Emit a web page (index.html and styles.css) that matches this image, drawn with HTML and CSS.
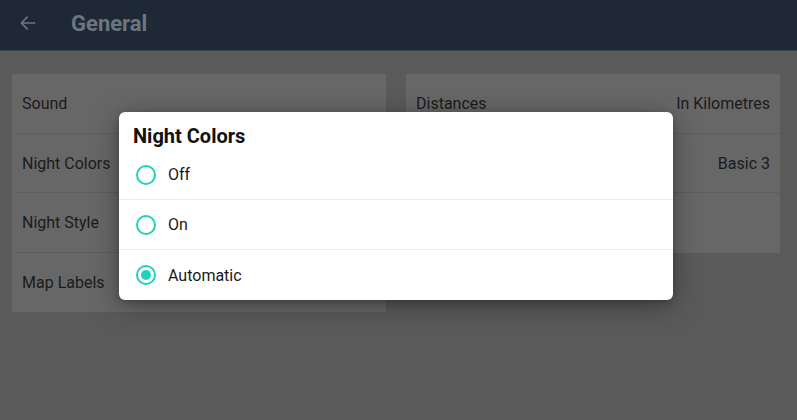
FILE: index.html
```html
<!DOCTYPE html>
<html lang="en">
<head>
<meta charset="utf-8">
<title>General</title>
<link rel="stylesheet" href="styles.css">
</head>
<body>
<header class="topbar">
  <svg class="back" width="20" height="20" viewBox="0 0 24 24"><path d="M20 12H5M11 5l-7 7 7 7" fill="none" stroke="currentColor" stroke-width="2" stroke-linecap="round" stroke-linejoin="round"/></svg>
  <h1 class="title">General</h1>
</header>
<main class="content">
  <section class="card">
    <div class="row"><span>Sound</span></div>
    <div class="row"><span>Night Colors</span></div>
    <div class="row"><span>Night Style</span></div>
    <div class="row last"><span>Map Labels</span></div>
  </section>
  <section class="card">
    <div class="row"><span>Distances</span><span>In Kilometres</span></div>
    <div class="row"><span></span><span>Basic 3</span></div>
    <div class="row last"><span></span></div>
  </section>
</main>
<div class="dialog">
  <h2 class="dialog-title">Night Colors</h2>
  <div class="option"><span class="radio"></span><span>Off</span></div>
  <div class="option"><span class="radio"></span><span>On</span></div>
  <div class="option last"><span class="radio checked"></span><span>Automatic</span></div>
</div>
</body>
</html>
```
FILE: styles.css
```css
html, body {
  margin: 0;
  padding: 0;
  background: #5a5a5a;
  font-family: Roboto, "Liberation Sans", sans-serif;
  width: 797px;
  height: 420px;
  overflow: hidden;
}
.topbar {
  background: #1f2936;
  border-bottom: 1px solid #3e444c;
  display: flex;
  align-items: center;
  box-sizing: border-box;
  height: 51px;
  padding-left: 18px;
  color: #6c7580;
}
.back {
  margin-top: -4px;
}
.title {
  margin: -3px 0 0 33px;
  font-size: 22px;
  font-weight: 700;
  color: #6c7580;
}
.content {
  display: grid;
  grid-template-columns: 374px 374px;
  column-gap: 20px;
  align-items: start;
  padding: 23px 17px 0 12px;
}
.card {
  background: #676767;
}
.row {
  height: 59.5px;
  box-sizing: border-box;
  display: flex;
  align-items: center;
  justify-content: space-between;
  padding: 0 10px;
  font-size: 16px;
  color: #1b1b1b;
  position: relative;
}
.row::after {
  content: "";
  position: absolute;
  left: 4px;
  right: 0;
  bottom: 0;
  height: 1px;
  background: #5e5e5e;
}
.row.last::after { display: none; }
.dialog {
  position: absolute;
  left: 119px;
  top: 112px;
  width: 554px;
  height: 188px;
  background: #fff;
  border-radius: 6px;
  box-shadow: 0 6px 28px rgba(0,0,0,0.35), 0 2px 6px rgba(0,0,0,0.2);
  overflow: hidden;
}
.dialog-title {
  margin: 0;
  padding: 12px 0 0 14px;
  height: 38px;
  box-sizing: border-box;
  font-size: 20px;
  line-height: 24px;
  font-weight: 700;
  color: #111;
}
.option {
  height: 50px;
  box-sizing: border-box;
  border-bottom: 1px solid #ececec;
  display: flex;
  align-items: center;
  padding-left: 17px;
  font-size: 16px;
  color: #1a1a1a;
  gap: 12px;
}
.option.last { border-bottom: none; }
.radio {
  width: 20px;
  height: 20px;
  box-sizing: border-box;
  border: 2.5px solid #22d1ba;
  border-radius: 50%;
  display: flex;
  align-items: center;
  justify-content: center;
}
.radio.checked::before {
  content: "";
  width: 10px;
  height: 10px;
  border-radius: 50%;
  background: #22d1ba;
}
```
